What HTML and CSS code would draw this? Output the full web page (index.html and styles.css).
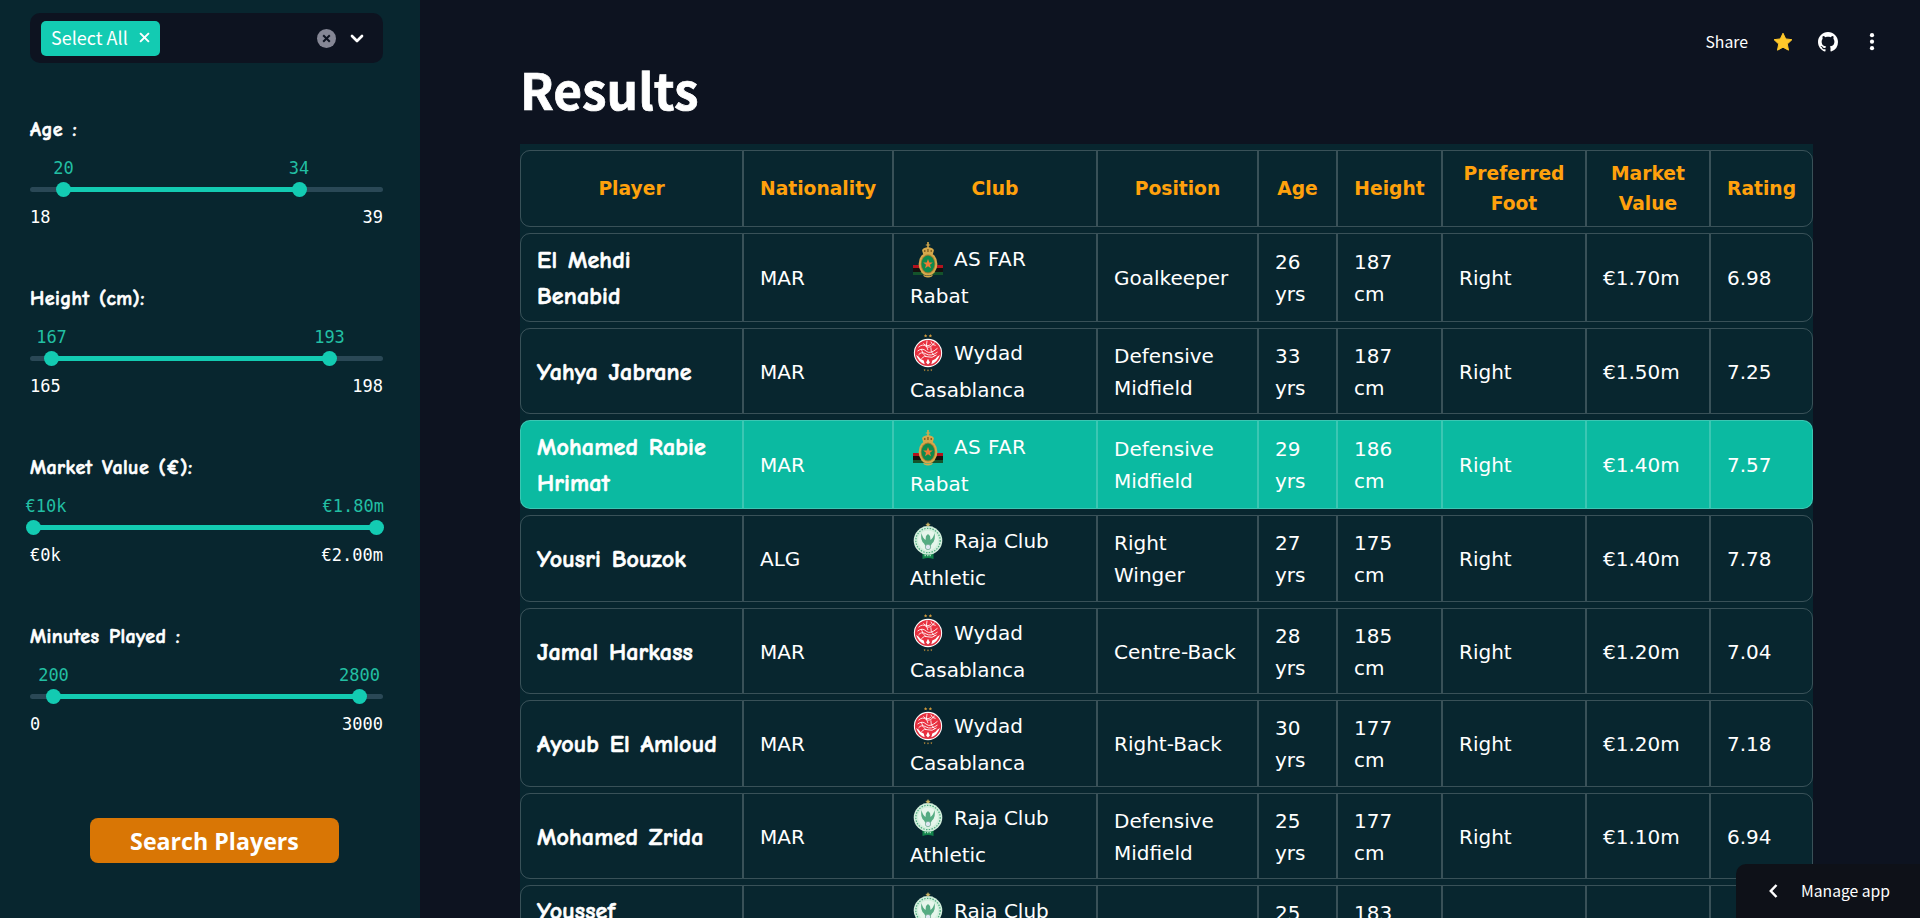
FILE: index.html
```html
<!DOCTYPE html>
<html lang="en">
<head>
<meta charset="utf-8">
<title>Results</title>
<link rel="stylesheet" href="styles.css">
</head>
<body>
<svg class="defs" aria-hidden="true">
  <symbol id="far" viewBox="0 0 30 38">
    <path fill="#b3121d" d="M0 25h30v4H0z"/><path fill="#15110f" d="M0 28h30v4H0z"/><path fill="#14532b" d="M0 32h30v3H0z"/>
    <path fill="#d5a94c" d="M14.200 2h1.600v2.400h1.400v1.200h-1.400v1.600c3 .3 5.300 1.600 5.100 3.400l-1 3.400h-9.800l-1-3.400c-.2-1.800 2.100-3.100 5.100-3.400V5.600h-1.400V4.400h1.400z"/>
    <path fill="#8a6522" d="M11 10h1.500v2H11zM14.200 9h1.500v3h-1.500zM17.500 10H19v2h-1.500z"/>
    <ellipse cx="15" cy="24" rx="9.400" ry="11.500" fill="#d5a94c"/>
    <ellipse cx="15" cy="24" rx="7.300" ry="9.400" fill="#a87c30"/>
    <ellipse cx="15" cy="24" rx="6.500" ry="8.600" fill="#0d8a4d"/>
    <path fill="#ef7b35" d="m15 19 1.300 3.500h3.500l-2.800 2.200 1 3.500-3-2-3 2 1-3.500-2.800-2.200h3.500z"/>
    <path fill="#d5a94c" d="M10 34.500q5 3 10 0l-1 2q-4 2-8 0z"/>
  </symbol>
  <symbol id="wydad" viewBox="0 0 30 40">
    <path fill="#d39a3c" d="m12.500 0 .6 1.200 1.300.1-1 .9.300 1.300-1.200-.7-1.200.7.300-1.300-1-.9 1.300-.1zM17.500 0l.6 1.200 1.300.1-1 .9.300 1.300-1.200-.7-1.200.7.300-1.300-1-.9 1.300-.1zM10.500 37l2 .5-1 1.800zM14 37.500h2l-1 2zM19.500 37l-2 .5 1 1.800z"/>
    <circle cx="15" cy="20" r="14.900" fill="#fff"/><circle cx="15" cy="20" r="13.800" fill="#df3040"/>
    <circle cx="15" cy="18.500" r="11.600" fill="#e9303f"/>
    <path fill="none" stroke="#fff" stroke-width=".9" d="M5 14q4-4 8-1t9-4M4 18q5-4 9 0t12-3M5 22q3-4 8-1t12-2M8 26q3-4 7-2t9-2M10 10q4 4 8 1M18 8q1 4 5 4M8 16q1 5 5 8M18 14q-1 5 4 9M14 7q-2 6 1 10"/>
    <path fill="#fff" d="M2.500 22q3 8 9 9.800l-1-4q-4-1-5.500-4zM27.500 22q-3 8-9 9.800l1-4q4-1 5.500-4zM13 30l2-4 2 4-2 2z"/>
  </symbol>
  <symbol id="raja" viewBox="0 0 30 38">
    <path fill="#c7b263" d="m15 0 .8 1.800 2 .1-1.500 1.200.5 1.900-1.800-1-1.800 1 .5-1.900-1.500-1.200 2-.1z"/>
    <path fill="#b5dcc4" d="M10 4.500h10l-2 3h-6z"/>
    <path fill="#11834a" d="M9.500 29h11v8q-5.500-2-11 0z"/>
    <circle cx="15" cy="18.500" r="14.300" fill="#d3efdd"/>
    <circle cx="15" cy="18.500" r="12.200" fill="none" stroke="#4fae80" stroke-width="1.200" stroke-dasharray="1.500 1.300"/>
    <circle cx="15" cy="18.500" r="10" fill="#e6f6eb"/>
    <path fill="#55ab82" d="M8.500 11q1 5 4 7l.5-4 2-2 2 2 .5 4q3-2 4-7 1.500 7-2.500 10.500L17 25h-4l-2-3.500Q7 18 8.500 11z"/>
    <circle cx="15" cy="25" r="2.700" fill="#dfe6f1" stroke="#62a487" stroke-width=".7"/>
    <path stroke="#9cd5b4" stroke-width="1.600" stroke-dasharray="1.500 1" d="M11.500 33.500h7"/>
  </symbol>
</svg>

<div class="app">
  <aside class="sidebar">
    <div class="select">
      <span class="tag">Select All
        <svg class="tag-x" viewBox="0 0 10 10"><path d="m1 1 8 8M9 1 1 9"/></svg>
      </span>
      <span class="select-actions">
        <svg class="clear" viewBox="0 0 19 19"><circle cx="9.500" cy="9.500" r="9.500"/><path d="m6.200 6.200 6.600 6.600M12.800 6.200l-6.600 6.600"/></svg>
        <svg class="chevron" viewBox="0 0 14 9"><path d="m2 2 5 5 5-5"/></svg>
      </span>
    </div>
    <div id="sliders" class="sliders"></div>
    <button class="search">Search Players</button>
  </aside>

  <main class="main">
    <h1 class="title">Results</h1>
    <table class="results">
      <colgroup><col class="c-player"><col class="c-nat"><col class="c-club"><col class="c-pos"><col class="c-age"><col class="c-height"><col class="c-foot"><col class="c-value"><col class="c-rating"></colgroup>
      <thead><tr><th>Player</th><th>Nationality</th><th>Club</th><th>Position</th><th>Age</th><th>Height</th><th>Preferred Foot</th><th>Market Value</th><th>Rating</th></tr></thead>
      <tbody id="rows"></tbody>
    </table>
  </main>
</div>

<nav class="toolbar">
  <span class="share">Share</span>
  <svg class="star" viewBox="0 0 20 20"><path d="m10 1.200 2.700 5.700 6.200.8-4.600 4.300 1.200 6.200L10 15.200l-5.500 3 1.200-6.200L1.100 7.700l6.200-.8z"/></svg>
  <svg class="github" viewBox="0 0 16 16"><path d="M8 0C3.580 0 0 3.580 0 8c0 3.540 2.290 6.530 5.470 7.590.4.070.55-.17.55-.38 0-.19-.01-.82-.01-1.490-2.010.37-2.530-.49-2.690-.94-.09-.23-.48-.94-.82-1.130-.28-.15-.68-.52-.01-.53.63-.01 1.080.58 1.230.82.720 1.210 1.870.87 2.330.66.070-.52.280-.87.510-1.070-1.780-.2-3.640-.89-3.640-3.950 0-.87.310-1.590.82-2.150-.08-.2-.36-1.020.08-2.120 0 0 .67-.21 2.200.82.640-.18 1.320-.27 2-.27s1.360.09 2 .27c1.530-1.040 2.200-.82 2.200-.82.44 1.100.16 1.920.08 2.120.51.560.82 1.270.82 2.150 0 3.070-1.870 3.750-3.650 3.950.29.250.54.730.54 1.480 0 1.070-.01 1.930-.01 2.200 0 .21.150.46.550.38A8.010 8.010 0 0 0 16 8c0-4.420-3.580-8-8-8z"/></svg>
  <svg class="dots" viewBox="0 0 6 20"><circle cx="3" cy="3.200" r="2.100"/><circle cx="3" cy="9.700" r="2.100"/><circle cx="3" cy="16.200" r="2.100"/></svg>
</nav>

<div class="manage">
  <svg class="back" viewBox="0 0 9 14"><path d="M7.500 1 1.800 7l5.700 6"/></svg>
  <span>Manage app</span>
</div>
<script src="app.js"></script>
</body>
</html>
```

FILE: app.js
```js
const sliders = [
  { label: 'Age :', min: '18', max: '39', from: ['20', 33.5], to: ['34', 269] },
  { label: 'Height (cm):', min: '165', max: '198', from: ['167', 21.5], to: ['193', 299.5] },
  { label: 'Market Value (€):', min: '€0k', max: '€2.00m', from: ['€10k', 3], to: ['€1.80m', 346.5], edge: true },
  { label: 'Minutes Played :', min: '0', max: '3000', from: ['200', 23.5], to: ['2800', 329.5] }
];

const thumb = ([text, x], cls = '') =>
  `<span class="thumb ${cls}" style="left:${x}px"><span class="thumb-value">${text}</span></span>`;

document.getElementById('sliders').innerHTML = sliders.map(s => `
  <section class="slider">
    <div class="slider-label">${s.label}</div>
    <div class="track">
      <span class="fill" style="left:${s.from[1]}px;width:${s.to[1] - s.from[1]}px"></span>
      ${thumb(s.from, s.edge ? 'edge-left' : '')}${thumb(s.to, s.edge ? 'edge-right' : '')}
    </div>
    <div class="range"><span>${s.min}</span><span>${s.max}</span></div>
  </section>`).join('');

const clubs = {
  far: ['AS FAR', 'Rabat'],
  wydad: ['Wydad', 'Casablanca'],
  raja: ['Raja Club', 'Athletic']
};

const players = [
  ['El Mehdi<br>Benabid', 'MAR', 'far', 'Goalkeeper', 26, 187, '€1.70m', '6.98', 'first'],
  ['Yahya Jabrane', 'MAR', 'wydad', 'Defensive<br>Midfield', 33, 187, '€1.50m', '7.25'],
  ['Mohamed Rabie<br>Hrimat', 'MAR', 'far', 'Defensive<br>Midfield', 29, 186, '€1.40m', '7.57', 'active'],
  ['Yousri Bouzok', 'ALG', 'raja', 'Right<br>Winger', 27, 175, '€1.40m', '7.78'],
  ['Jamal Harkass', 'MAR', 'wydad', 'Centre-Back', 28, 185, '€1.20m', '7.04'],
  ['Ayoub El Amloud', 'MAR', 'wydad', 'Right-Back', 30, 177, '€1.20m', '7.18', 'tall'],
  ['Mohamed Zrida', 'MAR', 'raja', 'Defensive<br>Midfield', 25, 177, '€1.10m', '6.94', 'short'],
  ['Youssef<br>&nbsp;', '', 'raja', '', 25, 183, '', '']
];

document.getElementById('rows').innerHTML = players.map(p => `
  <tr class="row-${p[2]} ${p[8] || ''}">
    <td class="name">${p[0]}</td>
    <td>${p[1]}</td>
    <td class="club"><span class="club-line"><svg class="crest"><use href="#${p[2]}"/></svg>${clubs[p[2]][0]}</span><span class="club-rest">${clubs[p[2]][1]}</span></td>
    <td class="position">${p[3]}</td>
    <td>${p[4]}<br>yrs</td>
    <td>${p[5]}<br>cm</td>
    <td>${p[6] && 'Right'}</td>
    <td>${p[6]}</td>
    <td>${p[7]}</td>
  </tr>`).join('');
```

FILE: styles.css
```css
* { box-sizing: border-box; }

body {
  margin: 0;
  height: 918px;
  overflow: hidden;
  background: #0d1320;
  color: #fff;
  font-family: "Noto Sans CJK JP", "Noto Sans", sans-serif;
}

.defs { position: absolute; width: 0; height: 0; }

.app { display: flex; height: 918px; overflow: hidden; }

.sidebar {
  flex: none;
  width: 420px;
  padding: 13px 37px 0 30px;
  background: #08262f;
}

.select {
  display: flex;
  align-items: center;
  justify-content: space-between;
  height: 50px;
  padding: 0 19px 0 11px;
  border-radius: 10px;
  background: #0d1320;
}

.tag {
  display: flex;
  align-items: center;
  gap: 11px;
  width: 119px;
  height: 35px;
  padding: 0 0 1px 10px;
  border-radius: 5px;
  background: #13cbb2;
  font-size: 18px;
  line-height: 33px;
  white-space: nowrap;
}

.tag-x { width: 11px; height: 11px; }
.tag-x path { stroke: #fff; stroke-width: 1.8; }

.select-actions { display: flex; align-items: center; gap: 14px; }
.clear { width: 19px; height: 19px; fill: #858795; }
.clear path { stroke: #0d1320; stroke-width: 2; }
.chevron { width: 14px; height: 9px; fill: none; stroke: #fff; stroke-width: 2.700; stroke-linecap: round; stroke-linejoin: round; }

.sliders { padding-top: 53px; }
.slider { height: 169px; }

.slider-label {
  height: 28px;
  font: 700 20px/28px "Comic Sans MS", "Comic Neue", "Open Sans", sans-serif;
  letter-spacing: .4px;
  word-spacing: 2px;
  -webkit-text-stroke: .6px #fff;
}

.track {
  position: relative;
  height: 5px;
  margin-top: 43px;
  border-radius: 3px;
  background: #2a4856;
}

.fill { position: absolute; top: 0; height: 5px; background: #13cbb2; }

.thumb {
  position: absolute;
  top: -5px;
  width: 15px;
  height: 15px;
  margin-left: -7.500px;
  border-radius: 50%;
  background: #13cbb2;
}

.thumb-value {
  position: absolute;
  bottom: 17px;
  left: 50%;
  transform: translateX(-50%);
  color: #22bfa3;
  font: 17px/24px "DejaVu Sans Mono", monospace;
}

.edge-left .thumb-value { left: 0; transform: none; }
.edge-right .thumb-value { right: 0; left: auto; transform: none; }

.range {
  display: flex;
  justify-content: space-between;
  margin-top: 13px;
  font: 17px/24px "DejaVu Sans Mono", monospace;
}

.search {
  display: block;
  width: 249px;
  height: 45px;
  margin: 26px 0 0 60px;
  padding: 1px 0 0;
  border: 0;
  border-radius: 8px;
  background: #d97605;
  color: #fff;
  font: 700 23.200px/44px "Open Sans", sans-serif;
}

.main { flex: 1; min-width: 0; padding: 56px 0 0 100px; }

.title {
  margin: 0;
  height: 88px;
  font-size: 49.600px;
  font-weight: 700;
  line-height: 64px;
  -webkit-text-stroke: .7px #fff;
}

.results {
  width: 1293px;
  table-layout: fixed;
  border-collapse: separate;
  border-spacing: 0 6px;
  background: #08262f;
  font: 20px/32px "DejaVu Sans", sans-serif;
}

.c-player { width: 223px; }
.c-nat { width: 150px; }
.c-club { width: 204px; }
.c-pos { width: 161px; }
.c-age { width: 79px; }
.c-height { width: 105px; }
.c-foot { width: 144px; }
.c-value { width: 124px; }
.c-rating { width: 103px; }

th, td { border: 1px solid rgba(255, 255, 255, .2); padding: 0 16px; vertical-align: middle; text-align: left; }

th {
  height: 77px;
  color: #ffa10c;
  font-size: 18.700px;
  line-height: 30px;
  text-align: center;
}

td { height: 87px; padding-top: 1px; }
.row-far td { height: 89px; }
.row-wydad td { height: 86px; }
.tall td { height: 87px; }
.short td { height: 86px; }
.first td { padding-top: 0; }

th:first-child, td:first-child { border-radius: 10px 0 0 10px; }
th:last-child, td:last-child { border-radius: 0 10px 10px 0; }

.active td { background: #0bbaa1; }

.name {
  font: 700 24px/36px "Comic Sans MS", "Comic Neue", "Open Sans", sans-serif;
  letter-spacing: .15px;
  word-spacing: 2px;
  white-space: nowrap;
  -webkit-text-stroke: .6px #fff;
}

.club-line { display: flex; align-items: center; height: 38px; }
.club-rest { display: block; height: 37px; line-height: 37px; }
.row-far .club-line { letter-spacing: .4px; }
.crest { flex: none; width: 30px; height: 38px; margin: 0 11px 0 3px; }

.toolbar {
  position: absolute;
  top: 28px;
  right: 45px;
  display: flex;
  align-items: center;
  height: 28px;
  font-size: 15.800px;
  line-height: 28px;
}

.share { margin-right: 25px; }
.star { width: 20px; height: 20px; margin-right: 25px; fill: #ffc82a; stroke: #ffc82a; stroke-linejoin: round; }
.github { width: 20px; height: 20px; margin-right: 31px; fill: #fff; }
.dots { width: 6px; height: 20px; fill: #fff; }

.manage {
  position: absolute;
  right: 0;
  bottom: 0;
  display: flex;
  align-items: center;
  gap: 23px;
  width: 184px;
  height: 54px;
  padding-left: 33px;
  border-radius: 10px 0 0 0;
  background: #0e1118;
  font-size: 15.700px;
  line-height: 52px;
}

.back { width: 9px; height: 14px; fill: none; stroke: #fff; stroke-width: 2.500; }
```
